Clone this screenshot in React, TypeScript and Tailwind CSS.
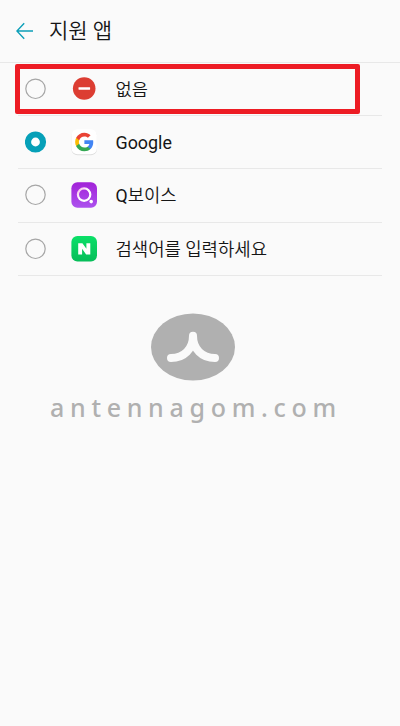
import React from "react";

function NoneIcon() {
  return (
    <svg viewBox="0 0 26 26" className="size-[26px]">
      <circle cx="13.2" cy="12.5" r="11.3" fill="#dc3d32" />
      <rect x="7.5" y="11.2" width="11.6" height="2.5" rx="0.4" fill="#fff" />
    </svg>
  );
}

function GoogleIcon() {
  return (
    <svg viewBox="0 0 26 26" className="size-[26px] overflow-visible">
      <rect x="0.5" y="1" width="25.4" height="25.2" rx="6" fill="#dedede" />
      <rect x="0.5" y="0.2" width="25.4" height="25" rx="6" fill="#fff" />
      <g transform="translate(3.3 2.9) scale(0.84)">
        <path fill="#4285F4" d="M22.56 12.25c0-.78-.07-1.53-.2-2.25H12v4.26h5.92c-.26 1.37-1.04 2.53-2.21 3.31v2.77h3.57c2.08-1.92 3.28-4.74 3.28-8.09z" />
        <path fill="#34A853" d="M12 23c2.97 0 5.46-.98 7.28-2.66l-3.57-2.77c-.98.66-2.23 1.06-3.71 1.06-2.86 0-5.29-1.93-6.16-4.53H2.18v2.84C3.99 20.53 7.7 23 12 23z" />
        <path fill="#FBBC05" d="M5.84 14.09c-.22-.66-.35-1.36-.35-2.09s.13-1.43.35-2.09V7.07H2.18C1.43 8.55 1 10.22 1 12s.43 3.45 1.18 4.93l3.66-2.84z" />
        <path fill="#EA4335" d="M12 5.38c1.62 0 3.06.56 4.21 1.64l3.15-3.15C17.45 2.09 14.97 1 12 1 7.7 1 3.99 3.47 2.18 7.07l3.66 2.84c.87-2.6 3.3-4.53 6.16-4.53z" />
      </g>
    </svg>
  );
}

function QVoiceIcon() {
  return (
    <svg viewBox="0 0 26 26" className="size-[26px]">
      <defs>
        <linearGradient id="violet" x1="0" y1="0" x2="0" y2="1">
          <stop offset="0" stopColor="#a221d8" />
          <stop offset="1" stopColor="#ac52ee" />
        </linearGradient>
        <linearGradient id="ring" x1="0" y1="0" x2="1" y2="1">
          <stop offset="0" stopColor="#f8b4e6" />
          <stop offset="0.45" stopColor="#fff" />
        </linearGradient>
      </defs>
      <rect x="0.4" y="0.2" width="25.6" height="25.6" rx="6" fill="url(#violet)" />
      <circle cx="13.1" cy="12.6" r="6.2" fill="none" stroke="url(#ring)" strokeWidth="2.2" />
      <circle cx="20.2" cy="19.6" r="1.8" fill="#fff" />
    </svg>
  );
}

function NaverIcon() {
  return (
    <svg viewBox="0 0 26 26" className="size-[26px]">
      <defs>
        <linearGradient id="green" x1="0" y1="0" x2="0" y2="1">
          <stop offset="0" stopColor="#0be068" />
          <stop offset="1" stopColor="#06bd59" />
        </linearGradient>
      </defs>
      <rect x="0.4" y="0" width="25.6" height="25.6" rx="6" fill="url(#green)" />
      <path fill="#fff" d="M7.2 7.2h4.2l4 5.6V7.2h3.9v11.2h-4.2l-4-5.6v5.6H7.2z" />
    </svg>
  );
}

function Radio({ checked }: { checked?: boolean }) {
  return (
    <svg viewBox="0 0 22 22" className="size-[22px]">
      {checked ? (
        <circle cx="10.5" cy="11" r="7.5" fill="#fff" stroke="#06a0b8" strokeWidth="6.2" />
      ) : (
        <circle cx="10.5" cy="10.8" r="9.7" fill="none" stroke="#a6a6a6" strokeWidth="1.2" />
      )}
    </svg>
  );
}

const options = [
  { latin: "", label: "없음", icon: <NoneIcon />, height: "h-[53px]", text: "text-[17.6px] pt-px" },
  { latin: "Google", label: "", icon: <GoogleIcon />, checked: true, height: "h-[53px]", text: "text-[17.9px] pt-[2px]" },
  { latin: "Q", label: "보이스", icon: <QVoiceIcon />, height: "h-[53.5px]", text: "text-[17.7px] pt-px" },
  { latin: "", label: "검색어를 입력하세요", icon: <NaverIcon />, height: "h-[53.5px]", text: "text-[17.8px] pt-[2px]" },
];

export default function App() {
  return (
    <main className="relative h-[726px] w-[400px] overflow-hidden bg-[#fafafa] font-['Roboto','Noto_Sans_CJK_KR',sans-serif] text-[#151515]">
      <header className="flex h-[63px] items-center border-b border-[#e8e8e8] pl-4">
        <svg viewBox="0 0 18 18" className="-mt-px size-[18px]" fill="none" stroke="#0c9fb8" strokeWidth="1.4">
          <path d="M8.2 1.2.9 9l7.3 7.8M1 9h16" />
        </svg>
        <h1 className="ml-[15px] text-[21px] font-[350] leading-[30px]">지원 앱</h1>
      </header>

      <ul className="mx-[18px]">
        {options.map((option) => (
          <li key={option.latin + option.label} className={`flex items-center border-b border-[#e8e8e8] pl-[7px] ${option.height}`}>
            <Radio checked={option.checked} />
            <span className="ml-[24.3px]">{option.icon}</span>
            <span className={`ml-[18.2px] leading-[26px] ${option.text}`}>
              {option.latin}
              <span className="font-[350]">{option.label}</span>
            </span>
          </li>
        ))}
      </ul>

      <div className="absolute left-[14.5px] top-[64px] h-[49.5px] w-[345px] rounded-[2px] border-[5px] border-[#ed1c24]" />

      <div className="mt-[37px] flex flex-col items-center pr-[14px]">
        <svg viewBox="0 0 84 68" className="h-[68px] w-[84px]">
          <ellipse cx="42" cy="34" rx="42" ry="33.5" fill="#b0b0b0" />
          <path d="M42 22.8C42 36 33 45 20 45M42 22.8C42 36 51 45 64 45" fill="none" stroke="#fafafa" strokeWidth="8" strokeLinecap="round" />
        </svg>
      </div>
      <p className="ml-[50px] mt-[8px] whitespace-nowrap font-['Noto_Sans',sans-serif] text-[25px] font-medium leading-[36px] tracking-[5.7px] text-[#b0b0b0]">
        antennagom.com
      </p>
    </main>
  );
}
